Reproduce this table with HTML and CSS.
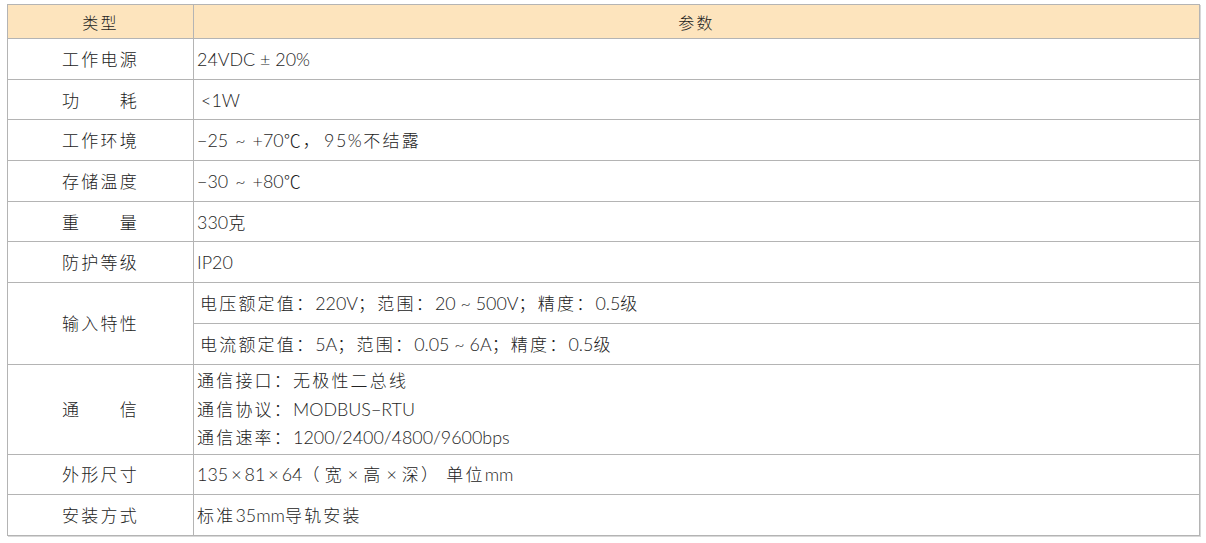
FILE: index.html
```html
<!DOCTYPE html>
<html lang="zh">
<head>
<meta charset="utf-8">
<link rel="stylesheet" href="styles.css">
</head>
<body>
<table class="spec">
  <colgroup><col class="c1"><col class="c2"></colgroup>
  <thead>
    <tr><th>类型</th><th>参数</th></tr>
  </thead>
  <tbody>
    <tr><td class="k">工作电源</td><td class="v"><span class="en">24VDC ± 20%</span></td></tr>
    <tr><td class="k">功　　耗</td><td class="v"><span class="en lt">&lt;1W</span></td></tr>
    <tr><td class="k">工作环境</td><td class="v"><span class="en">−25<span class="t">~</span>+70</span>℃，<span class="en pc">95%</span>不结露</td></tr>
    <tr><td class="k">存储温度</td><td class="v"><span class="en">−30<span class="t">~</span>+80</span>℃</td></tr>
    <tr><td class="k">重　　量</td><td class="v"><span class="en">330</span>克</td></tr>
    <tr><td class="k">防护等级</td><td class="v"><span class="en">IP20</span></td></tr>
    <tr><td class="k" rowspan="2">输入特性</td><td class="v sub">电压额定值：<span class="en">220V</span>；范围：<span class="en">20 ~ 500V</span>；精度：<span class="en">0.5</span>级</td></tr>
    <tr><td class="v sub">电流额定值：<span class="en">5A</span>；范围：<span class="en">0.05 ~ 6A</span>；精度：<span class="en">0.5</span>级</td></tr>
    <tr class="tall"><td class="k">通　　信</td><td class="v multi"><div>通信接口：无极性二总线</div><div>通信协议：<span class="en">MODBUS−RTU</span></div><div>通信速率：<span class="en">1200/2400/4800/9600bps</span></div></td></tr>
    <tr><td class="k">外形尺寸</td><td class="v"><span class="en">135<span class="m">×</span>81<span class="m">×</span>64</span><span class="paren">（</span>宽<span class="en x">×</span>高<span class="en x">×</span>深<span class="cparen">）</span>单位<span class="en">mm</span></td></tr>
    <tr><td class="k">安装方式</td><td class="v">标准<span class="en">35mm</span>导轨安装</td></tr>
  </tbody>
</table>
</body>
</html>
```
FILE: styles.css
```css
html, body {
  margin: 0;
  background: #ffffff;
}
body {
  padding: 4px 6px 6px 7px;
  font-family: "Noto Sans CJK SC", "Noto Sans", sans-serif;
  font-size: 17px;
  font-weight: 300;
  color: #222222;
}
.spec {
  width: 1193px;
  border-collapse: collapse;
  table-layout: fixed;
  border: 1px solid #b4b4b4;
  box-shadow: 1px 1px 0 #d8d8d8;
}
.c1 { width: 186px; }
.spec th, .spec td {
  border: 1px solid #b4b4b4;
  padding: 0;
  font-weight: 300;
  line-height: 20px;
  letter-spacing: 2.2px;
}
.spec th {
  height: 33px;
  background: #fde4bd;
  text-align: center;
  font-size: 16px;
  color: #1e1e1e;
}
.spec td {
  height: 39.7px;
}
.k {
  text-align: center;
}
.v {
  padding-left: 3px !important;
  text-align: left;
}
.sub {
  padding-left: 6px !important;
}
.tall td {
  height: 89px;
}
.multi div {
  line-height: 28.5px;
}
.en {
  font-family: "Lato", "DejaVu Sans", sans-serif;
  font-size: 17.9px;
  line-height: 16px;
  letter-spacing: 0;
  color: #1e1e1e;
  font-weight: 300;
}
.t {
  padding: 0 7px;
}
.m {
  padding: 0 3px;
}
.x {
  padding: 0 5px 0 4px;
}
.paren {
  padding-right: 3px;
}
.cparen {
  padding-right: 6px;
}
.pc {
  letter-spacing: 1.5px;
  padding-left: 2px;
}
.lt {
  padding-left: 4px;
}
```
